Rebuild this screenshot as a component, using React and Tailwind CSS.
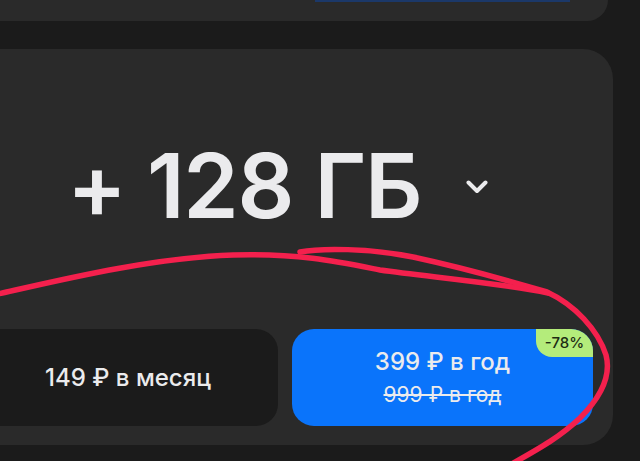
import React from "react";

export default function App() {
  return (
    <div
      className="relative w-[640px] h-[461px] overflow-hidden bg-[#1b1b1b] text-[#ebebed]"
      style={{ fontFamily: "Inter, 'Noto Sans', sans-serif" }}
    >
      {/* top card remnant */}
      <div className="ml-[-36px] w-[644px] h-[21px] bg-[#2a2a2a] rounded-b-[30px] flex">
        <div className="ml-[351px] w-[255px] h-[2px] bg-[#1b3869]" />
      </div>

      {/* main card */}
      <div className="mt-[28px] ml-[-36px] w-[649px] h-[396px] bg-[#2a2a2a] rounded-[30px] flex flex-col">
        <div className="flex items-center pl-[103px] pt-[86px] h-[186px]">
          <span className="text-[89px] leading-none font-semibold tracking-[-1.2px] whitespace-nowrap">
            + 128 ГБ
          </span>
          <svg
            width="22"
            height="14"
            viewBox="0 0 22 14"
            className="ml-[45px] mt-[4px]"
            fill="none"
          >
            <polyline
              points="2.5,2.5 11,11 19.5,2.5"
              stroke="#ebebed"
              strokeWidth="4"
              strokeLinecap="round"
              strokeLinejoin="round"
            />
          </svg>
        </div>

        <div className="mt-auto flex gap-[14px] pl-[14px] pr-[20px] pb-[19px]">
          <div className="w-[300px] h-[97px] rounded-[22px] bg-[#1b1b1b] flex items-center justify-center">
            <span className="text-[24px] font-medium whitespace-nowrap">149 ₽ в месяц</span>
          </div>
          <div className="relative w-[301px] h-[97px] rounded-[22px] bg-[#0a74fb] flex flex-col items-center justify-center">
            <span className="text-[24px] leading-[30px] font-medium whitespace-nowrap">399 ₽ в год</span>
            <span className="text-[21px] leading-[26px] mt-[5px] line-through decoration-2 whitespace-nowrap">
              999 ₽ в год
            </span>
            <div className="absolute top-0 right-0 w-[57px] h-[28px] bg-[#b4ec7b] rounded-tr-[22px] rounded-bl-[16px] flex items-center justify-center">
              <span className="text-[15px] text-[#1d2b14] font-medium">-78%</span>
            </div>
          </div>
        </div>
      </div>

      {/* red hand drawn mark */}
      <svg
        className="absolute inset-0 pointer-events-none"
        width="640"
        height="461"
        viewBox="0 0 640 461"
        fill="none"
      >
        <path
          d="M-2,294 C60,280 150,258 233,255 C300,253 340,262 380,270 C430,277 500,283 548,293"
          stroke="#f4204d"
          strokeWidth="5.5"
          strokeLinecap="round"
        />
        <path
          d="M300,252 C320,248 370,248 413,257 C450,265 500,278 547,292 C575,305 598,330 606,355 C612,378 598,400 580,418 C560,437 540,448 510,465"
          stroke="#f4204d"
          strokeWidth="5.5"
          strokeLinecap="round"
        />
      </svg>
    </div>
  );
}
